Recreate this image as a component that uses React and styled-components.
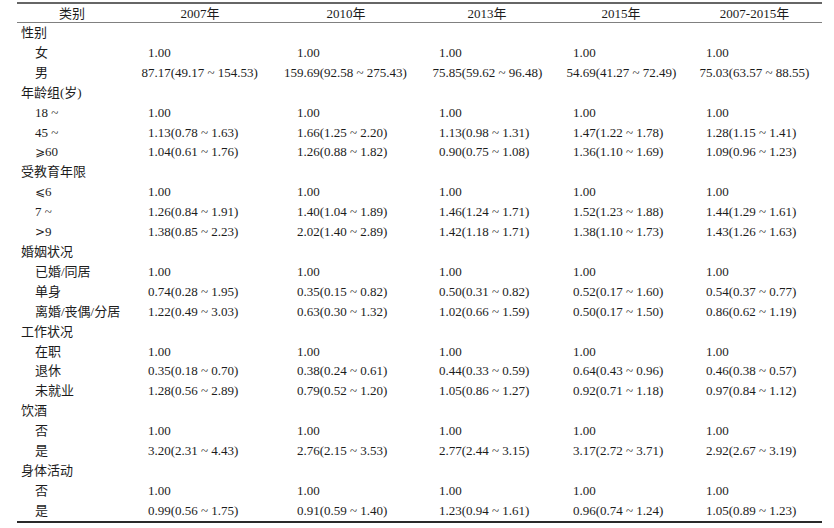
import React from 'react';
import styled, { createGlobalStyle } from 'styled-components';

const GlobalStyle = createGlobalStyle`
   html, body {
      margin: 0;
      padding: 0;
      background: #ffffff;
   }
   body {
      font-family: "Liberation Serif", "Noto Sans CJK SC", serif;
      color: #1c1c1c;
   }
`;

// column widths and the left offset of the data text in each column
const COLS = [110, 146, 146, 136, 132, 135];
const PADS = [21, 24, 20, 18, 19];
const YEARS = ['2007年', '2010年', '2013年', '2015年', '2007-2015年'];

const ONES = ['1.00', '1.00', '1.00', '1.00', '1.00'];

const sections = [
   {
      title: '性别',
      rows: [
         { label: '女', values: ONES },
         {
            label: '男',
            values: [
               '87.17(49.17 ~ 154.53)',
               '159.69(92.58 ~ 275.43)',
               '75.85(59.62 ~ 96.48)',
               '54.69(41.27 ~ 72.49)',
               '75.03(63.57 ~ 88.55)',
            ],
         },
      ],
   },
   {
      title: '年龄组(岁)',
      rows: [
         { label: '18 ~', values: ONES },
         {
            label: '45 ~',
            values: ['1.13(0.78 ~ 1.63)', '1.66(1.25 ~ 2.20)', '1.13(0.98 ~ 1.31)', '1.47(1.22 ~ 1.78)', '1.28(1.15 ~ 1.41)'],
         },
         {
            sym: '⩾',
            label: '60',
            values: ['1.04(0.61 ~ 1.76)', '1.26(0.88 ~ 1.82)', '0.90(0.75 ~ 1.08)', '1.36(1.10 ~ 1.69)', '1.09(0.96 ~ 1.23)'],
         },
      ],
   },
   {
      title: '受教育年限',
      rows: [
         { sym: '⩽', label: '6', values: ONES },
         {
            label: '7 ~',
            values: ['1.26(0.84 ~ 1.91)', '1.40(1.04 ~ 1.89)', '1.46(1.24 ~ 1.71)', '1.52(1.23 ~ 1.88)', '1.44(1.29 ~ 1.61)'],
         },
         {
            sym: '>',
            label: '9',
            values: ['1.38(0.85 ~ 2.23)', '2.02(1.40 ~ 2.89)', '1.42(1.18 ~ 1.71)', '1.38(1.10 ~ 1.73)', '1.43(1.26 ~ 1.63)'],
         },
      ],
   },
   {
      title: '婚姻状况',
      rows: [
         { label: '已婚/同居', values: ONES },
         {
            label: '单身',
            values: ['0.74(0.28 ~ 1.95)', '0.35(0.15 ~ 0.82)', '0.50(0.31 ~ 0.82)', '0.52(0.17 ~ 1.60)', '0.54(0.37 ~ 0.77)'],
         },
         {
            label: '离婚/丧偶/分居',
            values: ['1.22(0.49 ~ 3.03)', '0.63(0.30 ~ 1.32)', '1.02(0.66 ~ 1.59)', '0.50(0.17 ~ 1.50)', '0.86(0.62 ~ 1.19)'],
         },
      ],
   },
   {
      title: '工作状况',
      rows: [
         { label: '在职', values: ONES },
         {
            label: '退休',
            values: ['0.35(0.18 ~ 0.70)', '0.38(0.24 ~ 0.61)', '0.44(0.33 ~ 0.59)', '0.64(0.43 ~ 0.96)', '0.46(0.38 ~ 0.57)'],
         },
         {
            label: '未就业',
            values: ['1.28(0.56 ~ 2.89)', '0.79(0.52 ~ 1.20)', '1.05(0.86 ~ 1.27)', '0.92(0.71 ~ 1.18)', '0.97(0.84 ~ 1.12)'],
         },
      ],
   },
   {
      title: '饮酒',
      rows: [
         { label: '否', values: ONES },
         {
            label: '是',
            values: ['3.20(2.31 ~ 4.43)', '2.76(2.15 ~ 3.53)', '2.77(2.44 ~ 3.15)', '3.17(2.72 ~ 3.71)', '2.92(2.67 ~ 3.19)'],
         },
      ],
   },
   {
      title: '身体活动',
      rows: [
         { label: '否', values: ONES },
         {
            label: '是',
            values: ['0.99(0.56 ~ 1.75)', '0.91(0.59 ~ 1.40)', '1.23(0.94 ~ 1.61)', '0.96(0.74 ~ 1.24)', '1.05(0.89 ~ 1.23)'],
         },
      ],
   },
];

// decimal alignment: count extra integer digits before the point
const leadOf = (v) => Math.max(0, v.indexOf('.') - 1);

const App = () => (
   <>
      <GlobalStyle />
      <Page>
         <Table>
            <HeadRow>
               <HeadCell>类别</HeadCell>
               {YEARS.map((y) => (
                  <HeadCell key={y}>{y}</HeadCell>
               ))}
            </HeadRow>
            {sections.map((s) => (
               <React.Fragment key={s.title}>
                  <Row>
                     <GroupCell>{s.title}</GroupCell>
                  </Row>
                  {s.rows.map((r, i) => (
                     <Row key={s.title + i}>
                        <ItemCell>
                           {r.sym && <Sym>{r.sym}</Sym>}
                           {r.label}
                        </ItemCell>
                        {r.values.map((v, j) => (
                           <ValueCell key={j} $pad={PADS[j]} $lead={leadOf(v)}>
                              {v}
                           </ValueCell>
                        ))}
                     </Row>
                  ))}
               </React.Fragment>
            ))}
         </Table>
      </Page>
   </>
);
export default App;

const Page = styled.div`
   padding: 2px 0 0 17px;
`;

const Table = styled.div`
   width: ${COLS.reduce((a, b) => a + b, 0)}px;
   font-size: 13px;
   border-bottom: 2px solid #2a2a2a;
`;

const HeadRow = styled.div`
   display: grid;
   grid-template-columns: ${COLS.map((c) => c + 'px').join(' ')};
   height: 18px;
   padding-top: 1px;
   box-sizing: border-box;
   line-height: 18px;
   border-top: 2px solid #666;
   border-bottom: 1px solid #808080;
   height: 21px;
`;

const HeadCell = styled.div`
   text-align: center;
   white-space: nowrap;
`;

const Row = styled.div`
   display: grid;
   grid-template-columns: ${COLS.map((c) => c + 'px').join(' ')};
   height: 19.92px;
   line-height: 20px;
   white-space: nowrap;
`;

const GroupCell = styled.div`
   grid-column: 1 / -1;
   padding-left: 4px;
`;

const ItemCell = styled.div`
   padding-left: 18px;
`;

const Sym = styled.span`
   font-family: "DejaVu Sans", sans-serif;
   font-size: 12px;
`;

const ValueCell = styled.div`
   padding-left: calc(${(p) => p.$pad}px - ${(p) => p.$lead * 0.5}em);
`;
